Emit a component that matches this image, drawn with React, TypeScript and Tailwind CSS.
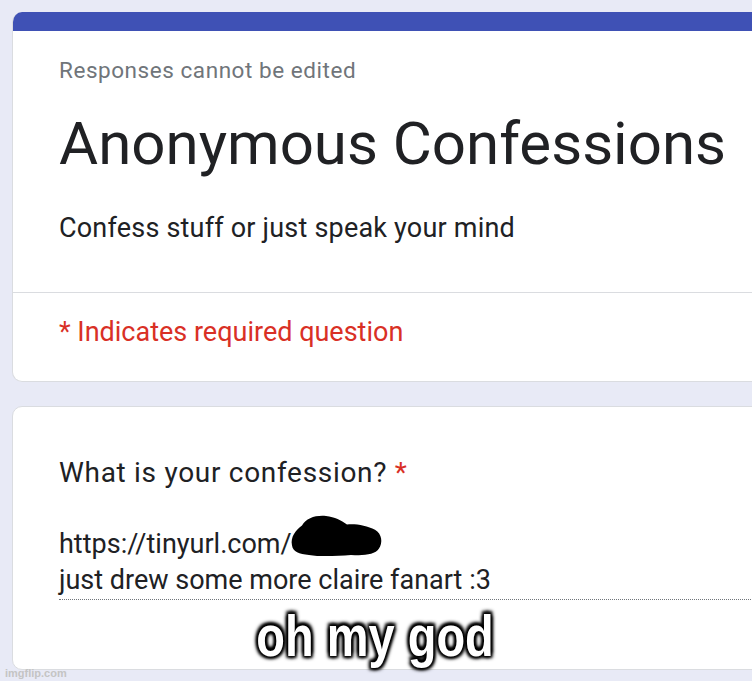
import React from 'react';

const roboto = { fontFamily: 'Roboto, "Liberation Sans", sans-serif' };

const RedactBlob: React.FC = () => (
  <svg width="94" height="42" viewBox="0 0 94 40" preserveAspectRatio="none" className="absolute left-full ml-[-3px] top-[-11px]">
    <path
      d="M3 29 C1 21 7 14 13 10 C17 3 27 0 37 1 C46 2 52 5 58 9 C66 8 78 10 86 14 C93 18 94 26 90 32 C86 38 74 39 62 38 C48 39 32 40 20 38 C10 37 4 35 3 29 Z"
      fill="#000"
    />
  </svg>
);

export default function App() {
  return (
    <div className="relative w-[752px] h-[681px] overflow-hidden bg-[#e8eaf6]" style={roboto}>
      <div className="pl-[12px] pt-[12px] w-[900px] flex flex-col gap-[24px]">
        {/* header card */}
        <div className="rounded-[10px] overflow-hidden bg-white border border-[#dadce0] border-t-0 h-[370px]">
          <div className="h-[19px] bg-[#3f51b5]" />
          <div className="pl-[46px] pt-[25px] pb-[48px] border-b border-[#dadce0]">
            <div className="text-[22.5px] leading-[28px] tracking-[0.55px] text-[#70757a]">
              Responses cannot be edited
            </div>
            <div className="mt-[24px] text-[60px] leading-[72px] text-[#202124]">Anonymous Confessions</div>
            <div className="mt-[32px] text-[27px] leading-[32px] tracking-[0.2px] text-[#202124]">
              Confess stuff or just speak your mind
            </div>
          </div>
          <div className="pl-[46px] pt-[23px] text-[27px] leading-[32px] text-[#d93025]">
            * Indicates required question
          </div>
        </div>

        {/* question card */}
        <div className="rounded-[10px] bg-white border border-[#dadce0] h-[264px] pl-[46px] pt-[49px]">
          <div className="text-[28px] leading-[34px] tracking-[0.7px] text-[#202124]">
            What is your confession? <span className="text-[#d93025]">*</span>
          </div>
          <div className="mt-[36px] text-[27px] leading-[36px] text-[#202124] border-b border-dotted border-[#70757a] pb-[1px]">
            <div className="relative w-fit">
              https://tinyurl.com/
              <RedactBlob />
            </div>
            <div>just drew some more claire fanart :3</div>
          </div>
        </div>
      </div>

      {/* meme caption */}
      <div className="absolute left-0 right-0 top-[608px] flex justify-center pr-[2px]">
        <span
          className="text-[47px] leading-[56px] font-bold text-white scale-y-[1.22] [text-shadow:0_0_2px_#000,0_0_3px_#000,2px_2px_3px_#000,-2px_-2px_3px_#000,2px_-2px_3px_#000,-2px_2px_3px_#000]"
          style={{ fontFamily: '"Liberation Sans", Arial, sans-serif' }}
        >
          oh my god
        </span>
      </div>

      <div
        className="absolute left-[5px] bottom-[1px] text-[11px] leading-[13px] font-bold text-[#c4c4c4]"
        style={{ fontFamily: '"Liberation Sans", Arial, sans-serif' }}
      >
        imgflip.com
      </div>
    </div>
  );
}
